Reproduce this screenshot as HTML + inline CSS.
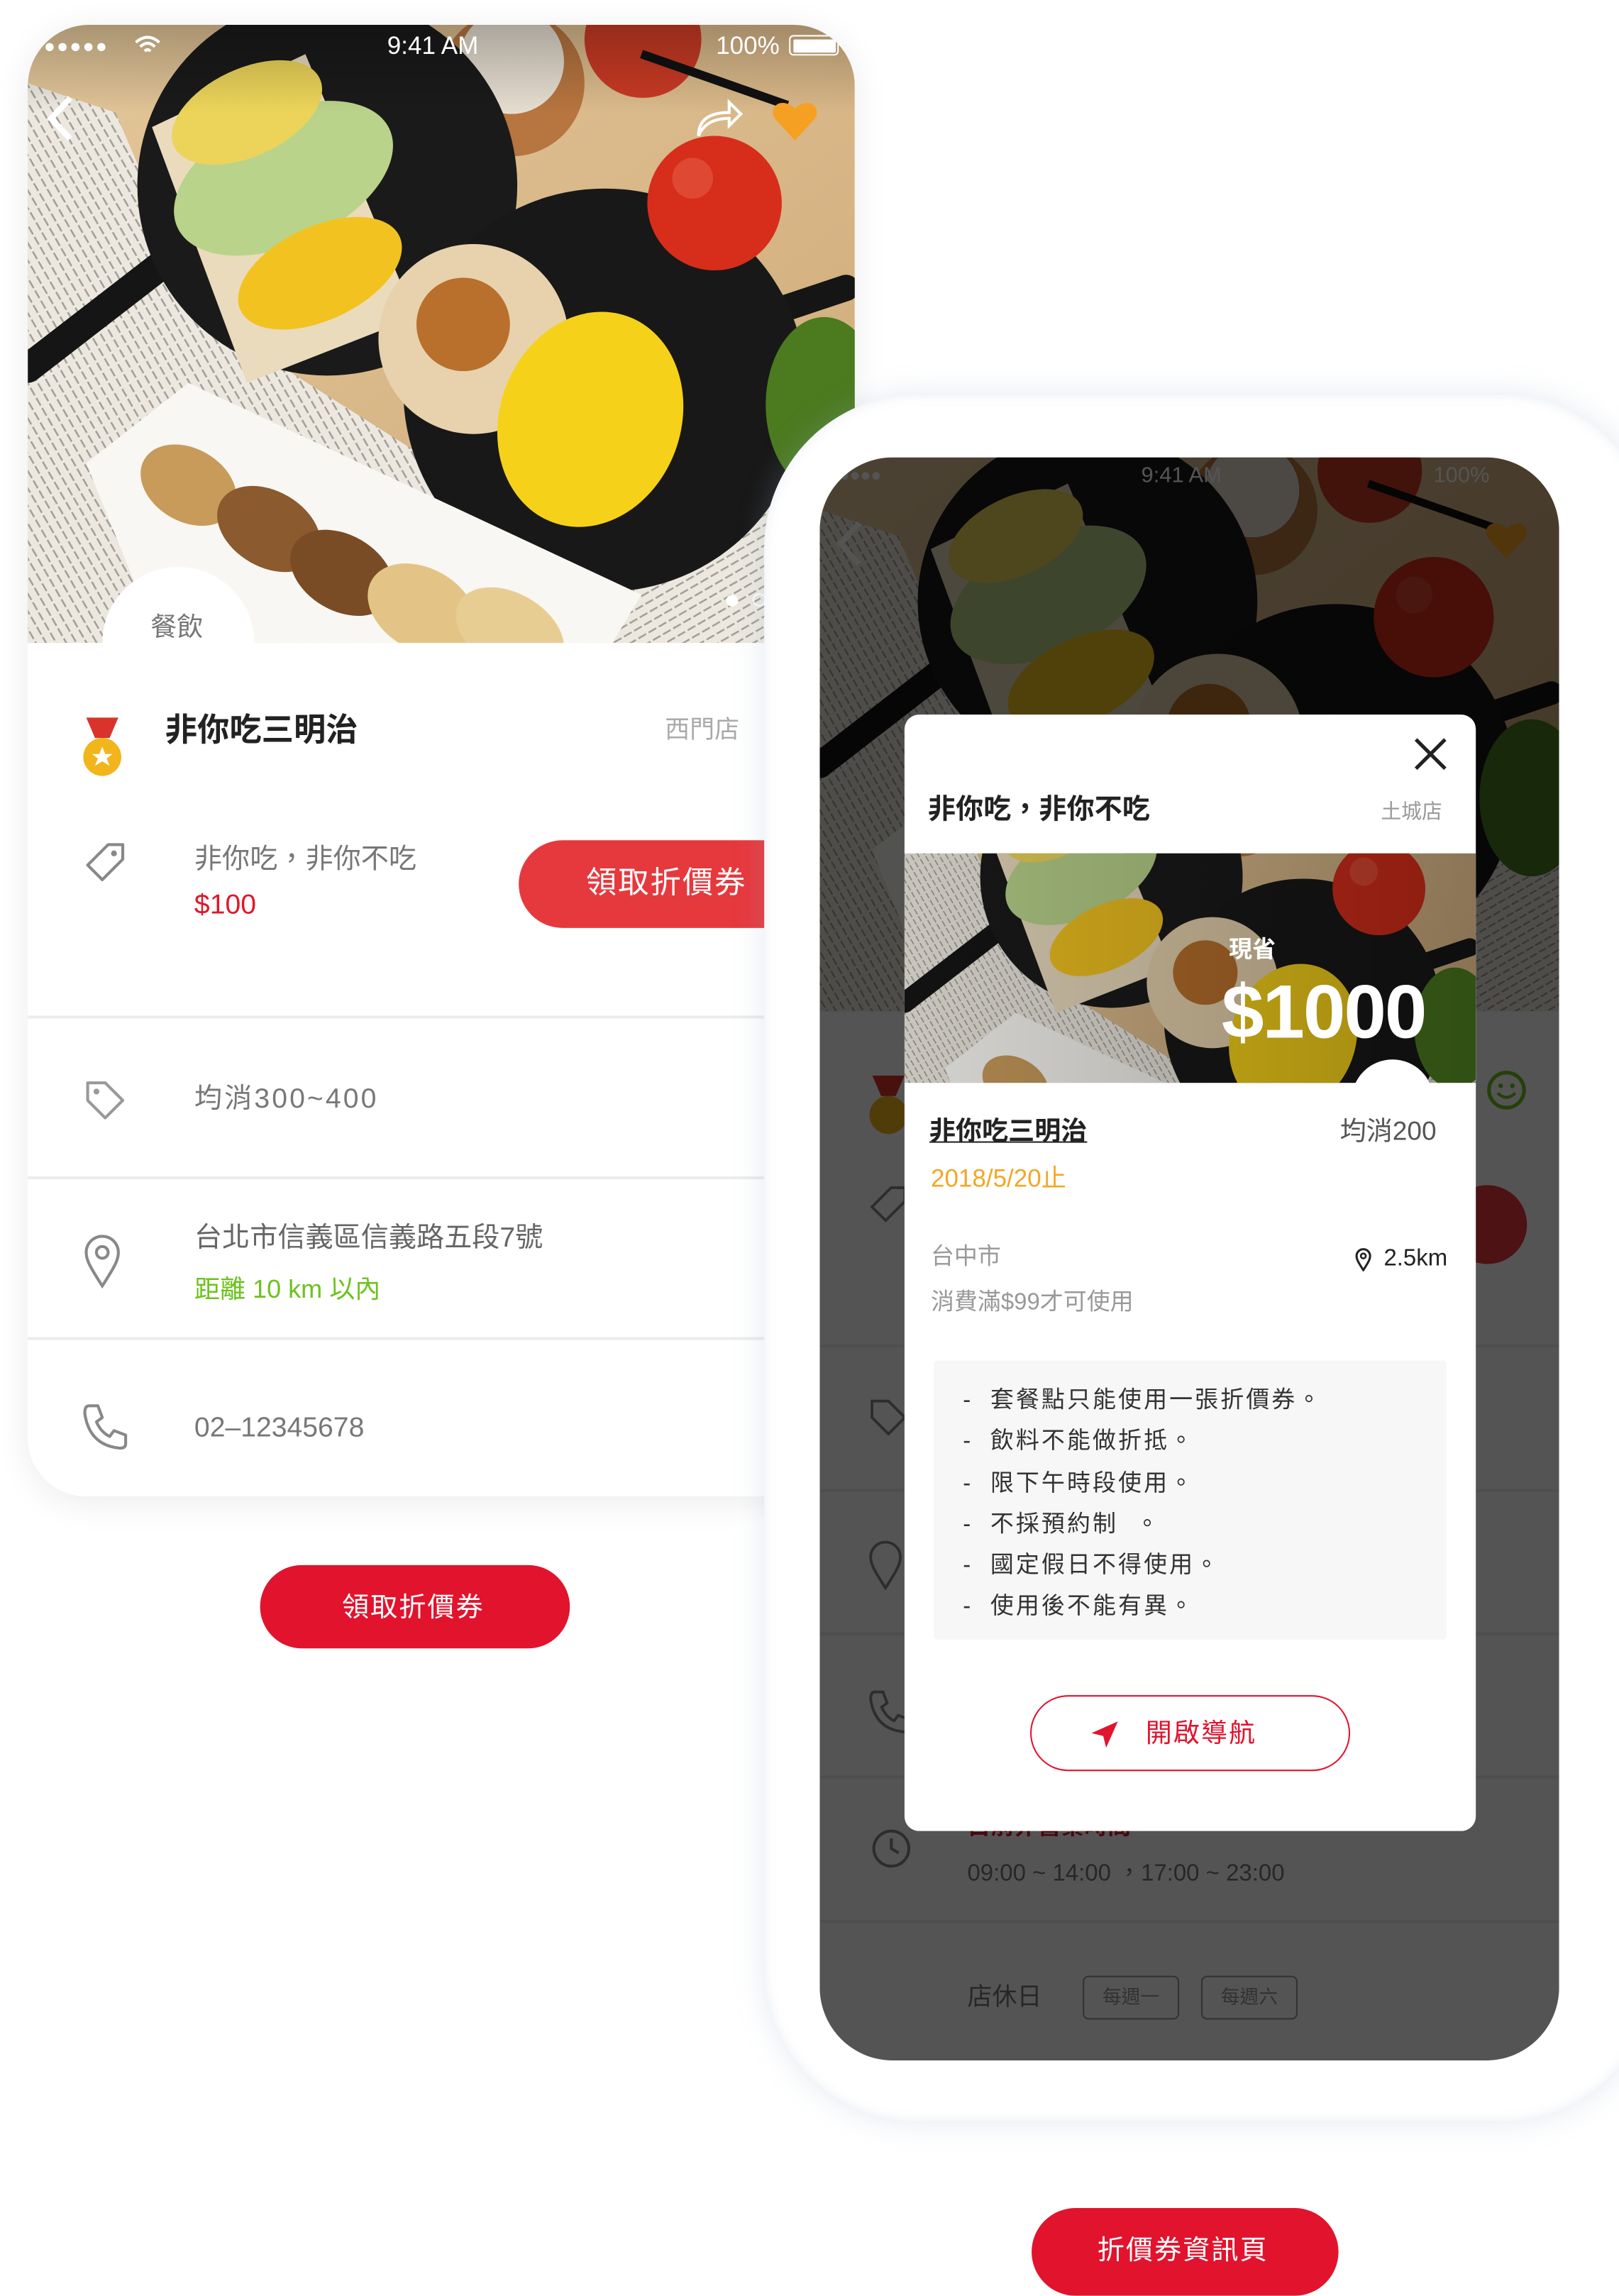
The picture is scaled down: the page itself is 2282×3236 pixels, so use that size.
<!DOCTYPE html>
<html><head><meta charset="utf-8">
<style>
html,body{margin:0;padding:0;background:#fff;overflow:hidden;width:2282px;height:3232px}
#w{position:absolute;left:0;top:0;width:1108px;height:1569px;transform:scale(2.0596);transform-origin:0 0;font-family:"Liberation Sans","Noto Sans CJK TC",sans-serif;}
.a{position:absolute}
.t{position:absolute;white-space:nowrap;line-height:1}
.div{position:absolute;height:2px;background:#ececec}
</style></head><body>
<svg width="0" height="0" style="position:absolute">
<defs>
<symbol id="food" viewBox="0 0 566 423" preserveAspectRatio="none">
<defs>
<linearGradient id="wood" x1="0" y1="0" x2="1" y2="1"><stop offset="0" stop-color="#e3c79a"/><stop offset="1" stop-color="#cfa978"/></linearGradient>
<pattern id="np" width="8" height="6" patternUnits="userSpaceOnUse" patternTransform="rotate(60)"><rect width="8" height="6" fill="#ece8df"/><rect y="2" width="6" height="1.2" fill="#a19d96"/></pattern>
<pattern id="np2" width="8" height="6" patternUnits="userSpaceOnUse" patternTransform="rotate(-30)"><rect width="8" height="6" fill="#ece8df"/><rect y="2" width="6" height="1.2" fill="#a19d96"/></pattern>
</defs>
<rect width="566" height="423" fill="url(#wood)"/>
<polygon points="0,40 60,60 120,200 310,320 330,423 0,423" fill="url(#np)"/>
<polygon points="330,300 566,290 566,423 380,423" fill="url(#np2)"/>
<circle cx="421" cy="10" r="40" fill="#c93a24"/>
<circle cx="331" cy="40" r="50" fill="#b7753f"/>
<circle cx="331" cy="25" r="36" fill="#e6ddd0"/>
<path d="M420 20 L520 55" stroke="#111" stroke-width="6"/>
<path d="M0 235 L110 150" stroke="#151515" stroke-width="20" stroke-linecap="round"/>
<circle cx="205" cy="110" r="130" fill="#1a1a1a"/>
<polygon points="85,70 190,20 265,200 150,245" fill="#eadbbd"/>
<ellipse cx="175" cy="105" rx="80" ry="45" fill="#b9d38a" transform="rotate(-25 175 105)"/>
<ellipse cx="150" cy="60" rx="55" ry="30" fill="#ecd45a" transform="rotate(-25 150 60)"/>
<ellipse cx="200" cy="170" rx="60" ry="32" fill="#f2c320" transform="rotate(-25 200 170)"/>
<path d="M440 220 L560 180" stroke="#151515" stroke-width="18" stroke-linecap="round"/>
<circle cx="395" cy="250" r="138" fill="#181818"/>
<circle cx="305" cy="215" r="65" fill="#e7d2ad"/>
<circle cx="298" cy="205" r="32" fill="#b8702c"/>
<ellipse cx="385" cy="270" rx="62" ry="75" fill="#f6d11a" transform="rotate(20 385 270)"/>
<circle cx="470" cy="122" r="46" fill="#d62e1b"/>
<circle cx="455" cy="105" r="14" fill="#e55a42" opacity=".6"/>
<ellipse cx="545" cy="260" rx="40" ry="60" fill="#4b7a1f"/>
<polygon points="40,300 110,245 420,390 400,423 90,423" fill="#f8f7f3"/>
<ellipse cx="110" cy="315" rx="35" ry="25" fill="#c89b5a" transform="rotate(30 110 315)"/>
<ellipse cx="165" cy="345" rx="38" ry="26" fill="#8b5a2e" transform="rotate(30 165 345)"/>
<ellipse cx="215" cy="375" rx="38" ry="26" fill="#7a4c26" transform="rotate(30 215 375)"/>
<ellipse cx="270" cy="400" rx="40" ry="28" fill="#e3c486" transform="rotate(30 270 400)"/>
<ellipse cx="330" cy="415" rx="40" ry="26" fill="#e8cd93" transform="rotate(30 330 415)"/>
</symbol>
</defs></svg>
<div id="w">

<!-- LEFT PHONE -->
<div class="a" style="left:19px;top:17px;width:566px;height:1007px;border-radius:42px 42px 40px 40px;background:#fff;box-shadow:0 4px 24px rgba(0,0,0,.08);overflow:hidden">
  <svg class="a" style="left:0;top:0" width="566" height="423"><use href="#food" width="566" height="423"/></svg>
  <div class="a" style="left:0;top:0;width:566px;height:60px;background:linear-gradient(rgba(0,0,0,.25),rgba(0,0,0,0))"></div>
  <div class="t" style="left:11px;top:8px;color:#fff;font-size:13px;letter-spacing:1px">●●●●●</div>
  <svg class="a" style="left:72px;top:7px" width="20" height="14" viewBox="0 0 20 14"><path d="M2 5 Q10 -2 18 5 M5 8 Q10 3 15 8 M8 11 Q10 9 12 11" stroke="#fff" stroke-width="2" fill="none"/></svg>
  <div class="t" style="left:246px;top:6px;color:#fff;font-size:17px">9:41 AM</div>
  <div class="t" style="left:471px;top:6px;color:#fff;font-size:17px">100%</div>
  <div class="a" style="left:521px;top:7px;width:32px;height:12px;border:1.5px solid #fff;border-radius:3px"><div style="margin:1.5px;height:9px;background:#fff;border-radius:1px"></div></div>
  <svg class="a" style="left:10px;top:47px" width="24" height="34"><path d="M19 3 L6 17 L19 31" stroke="#fff" stroke-width="4" fill="none"/></svg>
  <svg class="a" style="left:456px;top:48px" width="34" height="30"><path d="M3 28 Q3 12 24 12 L24 5 L32 13 L24 21 L24 16 Q8 16 3 28" stroke="#fff" stroke-width="2" fill="none"/></svg>
  <svg class="a" style="left:509px;top:50px" width="32" height="30" viewBox="0 0 32 30"><path d="M16 29 L3 15 C-3 8 5 -2 16 7 C27 -2 35 8 29 15 Z" fill="#f5a023"/></svg>
  <div class="a" style="left:478px;top:390px;width:8px;height:8px;border-radius:50%;background:#fff"></div>
  <div class="a" style="left:496px;top:389px;width:7px;height:7px;border-radius:50%;border:1.5px solid #fff"></div>
  <div class="a" style="left:51px;top:371px;width:104px;height:104px;border-radius:50%;background:#fff"></div>
  <div class="t" style="left:84px;top:403px;font-size:18px;color:#777">餐飲</div>
  <div class="a" style="left:0;top:423px;width:566px;height:600px;background:#fff"></div>

  <svg class="a" style="left:36px;top:474px" width="30" height="42" viewBox="0 0 30 42"><polygon points="4,0 26,0 20,14 10,14" fill="#d9342b"/><circle cx="15" cy="27" r="13" fill="#f3b51c"/><polygon points="15,20 17,25 22,25 18,28 20,33 15,30 10,33 12,28 8,25 13,25" fill="#fff"/></svg>
  <div class="t" style="left:94px;top:472px;font-size:22px;font-weight:bold;color:#222">非你吃三明治</div>
  <div class="t" style="left:436px;top:474px;font-size:17px;color:#aaa">西門店</div>
  <svg class="a" style="left:37px;top:557px" width="32" height="32" viewBox="0 0 32 32"><path d="M4 18 L18 4 L28 4 L28 14 L14 28 Z" stroke="#888" stroke-width="2" fill="none" stroke-linejoin="round"/><circle cx="22" cy="10" r="2" fill="#888"/></svg>
  <div class="t" style="left:114px;top:562px;font-size:19px;color:#777">非你吃，非你不吃</div>
  <div class="t" style="left:114px;top:593px;font-size:19px;color:#e0172b">$100</div>
  <div class="a" style="left:336px;top:558px;width:220px;height:60px;border-radius:30px;background:#e6393e"></div>
  <div class="t" style="left:382px;top:577px;font-size:21px;color:#fff;letter-spacing:1px">領取折價券</div>
  <div class="div" style="left:0;top:678px;width:566px"></div>
  <svg class="a" style="left:37px;top:720px" width="32" height="32" viewBox="0 0 32 32"><path d="M4 4 L16 4 L28 16 L16 28 L4 16 Z" stroke="#999" stroke-width="2" fill="none" stroke-linejoin="round"/><circle cx="10" cy="10" r="2" fill="#999"/></svg>
  <div class="t" style="left:114px;top:726px;font-size:19px;color:#777;letter-spacing:1.5px">均消300~400</div>
  <div class="div" style="left:0;top:788px;width:566px"></div>
  <svg class="a" style="left:38px;top:827px" width="26" height="38" viewBox="0 0 26 38"><path d="M13 36 C4 22 2 18 2 13 A11 11 0 0 1 24 13 C24 18 22 22 13 36 Z" stroke="#888" stroke-width="2" fill="none"/><circle cx="13" cy="13" r="4" stroke="#888" stroke-width="2" fill="none"/></svg>
  <div class="t" style="left:114px;top:821px;font-size:19px;color:#666">台北市信義區信義路五段7號</div>
  <div class="t" style="left:114px;top:857px;font-size:17.5px;color:#6dc21e">距離 10 km 以內</div>
  <div class="div" style="left:0;top:898px;width:566px"></div>
  <svg class="a" style="left:36px;top:942px" width="34" height="34" viewBox="0 0 34 34"><path d="M6 3 L12 3 L15 11 L11 14 Q14 21 20 24 L23 20 L31 23 L31 29 Q31 32 27 32 Q6 30 3 8 Q3 3 6 3 Z" stroke="#888" stroke-width="2" fill="none" stroke-linejoin="round"/></svg>
  <div class="t" style="left:114px;top:951px;font-size:19px;color:#777">02–12345678</div>
</div>
<div class="a" style="left:178px;top:1071px;width:212px;height:57px;border-radius:29px;background:#e2132d"></div>
<div class="t" style="left:234px;top:1091px;font-size:18.5px;color:#fff;letter-spacing:1px">領取折價券</div>

<!-- RIGHT PHONE -->
<div class="a" style="left:523px;top:270px;width:610px;height:1182px;border-radius:105px;background:#fff;box-shadow:0 0 20px rgba(150,170,200,.25), inset 0 0 8px rgba(180,195,215,.3)"></div>
<div class="a" style="left:561px;top:313px;width:506px;height:1097px;border-radius:50px;background:#fff;overflow:hidden">
  <svg class="a" style="left:0;top:0" width="506" height="379"><use href="#food" width="506" height="379"/></svg>
  <div class="t" style="left:6px;top:6px;color:#fff;font-size:12px">●●●●●</div>
  <div class="t" style="left:220px;top:5px;color:#fff;font-size:15px">9:41 AM</div>
  <div class="t" style="left:420px;top:5px;color:#fff;font-size:15px">100%</div>
  <svg class="a" style="left:8px;top:42px" width="24" height="34"><path d="M19 3 L6 17 L19 31" stroke="#fff" stroke-width="4" fill="none"/></svg>
  <svg class="a" style="left:455px;top:42px" width="30" height="28" viewBox="0 0 32 30"><path d="M16 29 L3 15 C-3 8 5 -2 16 7 C27 -2 35 8 29 15 Z" fill="#f5a023"/></svg>
  <svg class="a" style="left:32px;top:423px" width="30" height="42" viewBox="0 0 30 42"><polygon points="4,0 26,0 20,14 10,14" fill="#d9342b"/><circle cx="15" cy="27" r="13" fill="#f3b51c"/></svg>
  <svg class="a" style="left:455px;top:418px" width="30" height="30"><circle cx="15" cy="15" r="12" stroke="#6dc21e" stroke-width="2.5" fill="none"/><circle cx="11" cy="12" r="1.6" fill="#6dc21e"/><circle cx="19" cy="12" r="1.6" fill="#6dc21e"/><path d="M9 17 Q15 23 21 17" stroke="#6dc21e" stroke-width="2" fill="none"/></svg>
  <div class="a" style="left:430px;top:498px;width:54px;height:54px;border-radius:50%;background:#e6393e"></div>
  <svg class="a" style="left:32px;top:496px" width="30" height="30" viewBox="0 0 32 32"><path d="M4 18 L18 4 L28 4 L28 14 L14 28 Z" stroke="#888" stroke-width="2" fill="none"/></svg>
  <div class="div" style="left:0;top:607px;width:506px"></div>
  <svg class="a" style="left:32px;top:642px" width="30" height="30" viewBox="0 0 32 32"><path d="M4 4 L16 4 L28 16 L16 28 L4 16 Z" stroke="#888" stroke-width="2" fill="none"/></svg>
  <div class="div" style="left:0;top:706px;width:506px"></div>
  <svg class="a" style="left:33px;top:740px" width="24" height="36" viewBox="0 0 26 38"><path d="M13 36 C4 22 2 18 2 13 A11 11 0 0 1 24 13 C24 18 22 22 13 36 Z" stroke="#888" stroke-width="2" fill="none"/></svg>
  <div class="div" style="left:0;top:804px;width:506px"></div>
  <svg class="a" style="left:32px;top:842px" width="32" height="32" viewBox="0 0 34 34"><path d="M6 3 L12 3 L15 11 L11 14 Q14 21 20 24 L23 20 L31 23 L31 29 Q31 32 27 32 Q6 30 3 8 Q3 3 6 3 Z" stroke="#888" stroke-width="2" fill="none"/></svg>
  <div class="div" style="left:0;top:902px;width:506px"></div>
  <svg class="a" style="left:34px;top:937px" width="30" height="30"><circle cx="15" cy="15" r="12" stroke="#888" stroke-width="2" fill="none"/><path d="M15 8 L15 15 L20 18" stroke="#888" stroke-width="2" fill="none"/></svg>
  <div class="t" style="left:101px;top:930px;font-size:16px;color:#e0172b;font-weight:bold">目前非營業時間</div>
  <div class="t" style="left:101px;top:962px;font-size:16px;color:#777">09:00 ~ 14:00 ，17:00 ~ 23:00</div>
  <div class="div" style="left:0;top:1001px;width:506px"></div>
  <div class="t" style="left:101px;top:1045px;font-size:17px;color:#777">店休日</div>
  <div class="a" style="left:180px;top:1039px;width:64px;height:28px;border:1.5px solid #999;border-radius:4px;color:#999;font-size:13px;line-height:28px;text-align:center">每週一</div>
  <div class="a" style="left:261px;top:1039px;width:64px;height:28px;border:1.5px solid #999;border-radius:4px;color:#999;font-size:13px;line-height:28px;text-align:center">每週六</div>
  <div class="a" style="left:0;top:0;width:506px;height:1097px;background:rgba(0,0,0,.67)"></div>
</div>

<!-- MODAL -->
<div class="a" style="left:619px;top:489px;width:391px;height:764px;border-radius:10px;background:#fff;overflow:hidden">
  <svg class="a" style="left:348px;top:15px" width="24" height="24"><path d="M2 2 L22 22 M22 2 L2 22" stroke="#222" stroke-width="2.5"/></svg>
  <div class="t" style="left:16px;top:56px;font-size:19px;font-weight:bold;color:#222">非你吃，非你不吃</div>
  <div class="t" style="left:326px;top:59px;font-size:14px;color:#999">土城店</div>
  <svg class="a" style="left:0;top:95px" width="391" height="157"><use href="#food" x="0" y="-60" width="391" height="292"/></svg>
  <div class="a" style="left:0;top:95px;width:391px;height:157px;background:linear-gradient(90deg,rgba(0,0,0,.15),rgba(0,0,0,.35))"></div>
  <div class="t" style="left:222px;top:154px;font-size:16px;font-weight:bold;color:#fff">現省</div>
  <div class="t" style="left:217px;top:178px;font-size:52px;font-weight:bold;color:#fff;letter-spacing:-1px">$1000</div>
  <div class="a" style="left:306px;top:236px;width:56px;height:56px;border-radius:50%;background:#fff"></div>
  <div class="t" style="left:17px;top:276px;font-size:18px;font-weight:bold;color:#222;text-decoration:underline">非你吃三明治</div>
  <div class="t" style="left:298px;top:276px;font-size:18px;color:#555">均消200</div>
  <div class="t" style="left:18px;top:309px;font-size:17px;color:#f5a623">2018/5/20止</div>
  <div class="t" style="left:18px;top:364px;font-size:16px;color:#999">台中市</div>
  <svg class="a" style="left:308px;top:365px" width="12" height="16" viewBox="0 0 26 38"><path d="M13 36 C4 22 2 18 2 13 A11 11 0 0 1 24 13 C24 18 22 22 13 36 Z" stroke="#222" stroke-width="3.5" fill="none"/><circle cx="13" cy="13" r="4" stroke="#222" stroke-width="3" fill="none"/></svg>
  <div class="t" style="left:328px;top:365px;font-size:16px;color:#222">2.5km</div>
  <div class="t" style="left:18px;top:395px;font-size:16px;color:#999">消費滿$99才可使用</div>
  <div class="a" style="left:20px;top:442px;width:351px;height:191px;background:#f7f7f7;border-radius:3px"></div>
  <div class="a" style="left:40px;top:456px;font-size:16px;color:#333;line-height:28.3px;letter-spacing:1.5px;white-space:nowrap">-&nbsp; 套餐點只能使用一張折價券。<br>-&nbsp; 飲料不能做折抵。<br>-&nbsp; 限下午時段使用。<br>-&nbsp; 不採預約制&nbsp; 。<br>-&nbsp; 國定假日不得使用。<br>-&nbsp; 使用後不能有異。</div>
  <div class="a" style="left:86px;top:671px;width:217px;height:50px;border:1.5px solid #e2132d;border-radius:27px"></div>
  <svg class="a" style="left:126px;top:687px" width="22" height="22" viewBox="0 0 22 22"><polygon points="20,2 2,10 10,12 12,20" fill="#e2132d"/></svg>
  <div class="t" style="left:165px;top:688px;font-size:18px;color:#e2132d;letter-spacing:1px">開啟導航</div>
</div>

<div class="a" style="left:706px;top:1511px;width:210px;height:60px;border-radius:30px;background:#e2132d"></div>
<div class="t" style="left:751px;top:1531px;font-size:18.5px;color:#fff;letter-spacing:1px">折價券資訊頁</div>
</div>
</body></html>
